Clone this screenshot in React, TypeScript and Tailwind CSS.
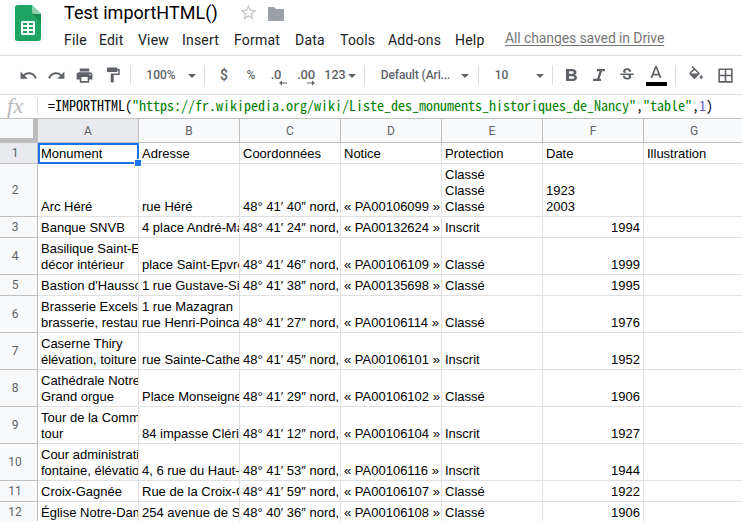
import React from 'react';

type Row = { h: number; a: string; b: string; c: string; d: string; e: string; f: string; g?: string; num?: boolean };

const rows: Row[] = [
  { h: 21, a: 'Monument', b: 'Adresse', c: 'Coordonnées', d: 'Notice', e: 'Protection', f: 'Date', g: 'Illustration' },
  { h: 53, a: 'Arc Héré', b: 'rue Héré', c: '48° 41′ 40″ nord,', d: '« PA00106099 »', e: 'Classé\nClassé\nClassé', f: '1923\n2003' },
  { h: 21, a: 'Banque SNVB', b: '4 place André-Ma', c: '48° 41′ 24″ nord,', d: '« PA00132624 »', e: 'Inscrit', f: '1994', num: true },
  { h: 37, a: 'Basilique Saint-E\ndécor intérieur', b: 'place Saint-Epvre', c: '48° 41′ 46″ nord,', d: '« PA00106109 »', e: 'Classé', f: '1999', num: true },
  { h: 21, a: "Bastion d'Hausso", b: '1 rue Gustave-Si', c: '48° 41′ 38″ nord,', d: '« PA00135698 »', e: 'Classé', f: '1995', num: true },
  { h: 37, a: 'Brasserie Excels\nbrasserie, restau', b: '1 rue Mazagran\nrue Henri-Poinca', c: '48° 41′ 27″ nord,', d: '« PA00106114 »', e: 'Classé', f: '1976', num: true },
  { h: 37, a: 'Caserne Thiry\nélévation, toiture', b: 'rue Sainte-Cathe', c: '48° 41′ 45″ nord,', d: '« PA00106101 »', e: 'Inscrit', f: '1952', num: true },
  { h: 37, a: 'Cathédrale Notre\nGrand orgue', b: 'Place Monseigne', c: '48° 41′ 29″ nord,', d: '« PA00106102 »', e: 'Classé', f: '1906', num: true },
  { h: 37, a: 'Tour de la Comm\ntour', b: '84 impasse Cléri', c: '48° 41′ 12″ nord,', d: '« PA00106104 »', e: 'Inscrit', f: '1927', num: true },
  { h: 37, a: 'Cour administrati\nfontaine, élévatio', b: '4, 6 rue du Haut-', c: '48° 41′ 53″ nord,', d: '« PA00106116 »', e: 'Inscrit', f: '1944', num: true },
  { h: 21, a: 'Croix-Gagnée', b: 'Rue de la Croix-G', c: '48° 41′ 59″ nord,', d: '« PA00106107 »', e: 'Classé', f: '1922', num: true },
  { h: 21, a: 'Église Notre-Dam', b: '254 avenue de S', c: '48° 40′ 36″ nord,', d: '« PA00106108 »', e: 'Classé', f: '1906', num: true },
];

const menus = [
  { t: 'File', w: 'w-[35px]' },
  { t: 'Edit', w: 'w-[39px]' },
  { t: 'View', w: 'w-11' },
  { t: 'Insert', w: 'w-[52px]' },
  { t: 'Format', w: 'w-[61px]' },
  { t: 'Data', w: 'w-[45px]' },
  { t: 'Tools', w: 'w-12' },
  { t: 'Add-ons', w: 'w-[67px]' },
  { t: 'Help', w: 'w-[50px]' },
];

function Icon({ d, size = 18 }: { d: string; size?: number }) {
  return (
    <svg width={size} height={size} viewBox="0 0 24 24" fill="currentColor" className="shrink-0">
      <path d={d} />
    </svg>
  );
}

function Caret() {
  return <span className="mt-px block h-0 w-0 shrink-0 border-x-4 border-t-4 border-x-transparent border-t-[#5f6368]" />;
}

function Sep() {
  return <span className="h-5 w-px shrink-0 bg-[#dadce0]" />;
}

function Tool({ w, children }: { w: string; children?: React.ReactNode }) {
  return <div className={`flex h-full shrink-0 items-center justify-center ${w}`}>{children}</div>;
}

function Header() {
  return (
    <header className="flex h-[55px] shrink-0">
      <svg width="64" height="55" viewBox="0 0 64 55" className="shrink-0">
        <path d="M17.500 5H32l9 9v24.500a2.500 2.500 0 0 1-2.500 2.500h-21a2.500 2.500 0 0 1-2.500-2.500V7.500A2.500 2.500 0 0 1 17.500 5z" fill="#20a464" />
        <path d="M32.500 14H41v8.500z" fill="#178a50" />
        <path d="M32 5l9 9h-7a2 2 0 0 1-2-2z" fill="#8ed1b1" />
        <path fillRule="evenodd" fill="#f1f8f4" d="M21 21h14v14H21zM23 23v2h4v-2zM29 23v2h4v-2zM23 27v2h4v-2zM29 27v2h4v-2zM23 31v2h4v-2zM29 31v2h4v-2z" />
      </svg>
      <div className="flex flex-col">
        <div className="flex h-[26px] items-center text-black">
          <span className="w-[175px] whitespace-nowrap text-[18px] leading-[26px] tracking-[0.030px]">Test importHTML()</span>
          <span className="w-[29px] pb-0.5 text-[#c4c6c9]">
            <Icon size={19} d="M22 9.240l-7.190-.62L12 2 9.190 8.630 2 9.240l5.460 4.730L5.820 21 12 17.270 18.180 21l-1.630-7.030L22 9.240zM12 15.400l-3.760 2.270 1-4.280-3.320-2.880 4.380-.38L12 6.100l1.710 4.040 4.380.38-3.320 2.880 1 4.280L12 15.400z" />
          </span>
          <svg width="17" height="15" viewBox="0 0 17 15" fill="#9aa0a6"><path d="M0 1h6l2 2h8v12H0z" /></svg>
        </div>
        <nav className="flex h-7 items-center text-sm text-[#202124]">
          {menus.map((m) => (
            <span key={m.t} className={`shrink-0 whitespace-nowrap tracking-[0.2px] ${m.w}`}>{m.t}</span>
          ))}
          <span className="mb-1 whitespace-nowrap tracking-[-0.110px] text-[#777] underline underline-offset-2">All changes saved in Drive</span>
        </nav>
      </div>
    </header>
  );
}

function Toolbar() {
  return (
    <div className="flex h-10 shrink-0 items-center border-y border-[#dadce0] pl-[14px] text-[12px] font-medium text-[#5f6368]">
      <Tool w="w-7"><Icon size={19} d="M12.500 8c-2.650 0-5.050.99-6.900 2.600L2 7v9h9l-3.620-3.620c1.390-1.160 3.160-1.880 5.120-1.880 3.540 0 6.550 2.310 7.600 5.500l2.370-.78C21.080 11.030 17.150 8 12.500 8z" /></Tool>
      <Tool w="w-7"><Icon size={19} d="M18.400 10.600C16.550 8.990 14.150 8 11.500 8c-4.650 0-8.580 3.030-9.960 7.220L3.900 16c1.050-3.190 4.050-5.500 7.600-5.500 1.950 0 3.730.72 5.120 1.880L13 16h9V7l-3.600 3.600z" /></Tool>
      <Tool w="w-7"><Icon size={19} d="M19 8H5c-1.660 0-3 1.340-3 3v6h4v4h12v-4h4v-6c0-1.660-1.340-3-3-3zm-3 11H8v-5h8v5zm3-7c-.55 0-1-.45-1-1s.45-1 1-1 1 .45 1 1-.45 1-1 1zm-1-9H6v4h12V3z" /></Tool>
      <Tool w="w-8 pr-[3px]"><Icon d="M18 4V3c0-.55-.45-1-1-1H5c-.55 0-1 .45-1 1v4c0 .55.45 1 1 1h12c.55 0 1-.45 1-1V6h1v4H9v11c0 .55.45 1 1 1h2c.55 0 1-.45 1-1v-9h8V4h-3z" /></Tool>
      <Sep />
      <Tool w="w-[57px] pl-[3px]">100%</Tool>
      <Tool w="w-4 pr-2"><Caret /></Tool>
      <Sep />
      <Tool w="w-[38px]"><span className="text-[14px]">$</span></Tool>
      <Tool w="w-4">%</Tool>
      <Tool w="w-[34px]"><span className="relative text-[13px] tracking-[-0.200px]">.0<svg className="absolute left-2 top-[15px]" width="8" height="6" viewBox="0 0 8 6" fill="currentColor"><path d="M0 3l3-2.500v2h5v1H3v2z" /></svg></span></Tool>
      <Tool w="w-[26px]"><span className="relative text-[13px] tracking-[-0.300px]">.00<svg className="absolute left-2.5 top-[15px]" width="8" height="6" viewBox="0 0 8 6" fill="currentColor"><path d="M8 3L5 .5v2H0v1h5v2z" /></svg></span></Tool>
      <Tool w="w-[45px] pr-[3px]"><span className="mr-[2px] text-[12.500px]">123</span><Caret /></Tool>
      <Sep />
      <Tool w="w-24 pl-[5px]"><span className="whitespace-nowrap tracking-[-0.100px]">Default (Ari...</span></Tool>
      <Tool w="w-[17px] pr-[9px]"><Caret /></Tool>
      <Sep />
      <Tool w="w-[45px]">10</Tool>
      <Tool w="w-7 pl-1"><Caret /></Tool>
      <Sep />
      <Tool w="w-9"><svg width="11" height="12" viewBox="7 4 10.750 14" preserveAspectRatio="none" fill="currentColor"><path d="M15.600 10.790c.97-.67 1.650-1.770 1.650-2.790 0-2.260-1.750-4-4-4H7v14h7.040c2.090 0 3.710-1.700 3.710-3.790 0-1.520-.86-2.820-2.150-3.420zM10 6.500h3c.83 0 1.500.67 1.500 1.500s-.67 1.500-1.500 1.500h-3v-3zm3.500 9H10v-3h3.500c.83 0 1.500.67 1.500 1.500s-.67 1.500-1.500 1.500z" /></svg></Tool>
      <Tool w="w-5"><svg width="12" height="12" viewBox="0 0 12 12" fill="currentColor"><path d="M4 0v2.200h2.600L4.100 9.800H0V12h8V9.800H6.500L9 2.200h3V0z" /></svg></Tool>
      <Tool w="w-9"><Icon d="M7.240 8.750c-.26-.48-.39-1.030-.39-1.670 0-.61.130-1.160.4-1.670.26-.5.630-.93 1.110-1.290.48-.35 1.050-.63 1.700-.83.66-.19 1.390-.29 2.180-.29.81 0 1.540.11 2.210.34.66.22 1.230.54 1.690.94.47.4.83.88 1.080 1.430s.38 1.150.38 1.810h-3.010c0-.31-.05-.59-.15-.85-.09-.27-.24-.49-.44-.68-.2-.19-.45-.33-.75-.44-.3-.1-.66-.16-1.060-.16-.39 0-.74.04-1.030.13s-.53.21-.72.36c-.19.16-.34.34-.44.55-.1.21-.15.43-.15.66 0 .48.250.88.740 1.210.38.250.77.480 1.410.700H7.390c-.05-.08-.11-.17-.15-.25zM21 12v-2H3v2h9.620c.18.070.4.140.55.200.37.170.66.340.87.510s.35.360.43.570c.07.200.11.430.11.690 0 .230-.05.450-.14.660-.09.200-.23.380-.42.530-.19.150-.42.260-.71.350-.29.080-.63.130-1.010.130-.43 0-.83-.04-1.180-.13s-.66-.23-.91-.42c-.25-.19-.45-.44-.59-.75s-.25-.76-.25-1.210H6.400c0 .55.080 1.130.24 1.580s.37.850.65 1.210c.28.350.600.660.98.920.37.260.78.480 1.220.650.44.170.900.300 1.380.390.48.080.96.130 1.440.130.800 0 1.530-.09 2.180-.28s1.210-.45 1.670-.79c.46-.34.820-.77 1.070-1.270s.38-1.070.38-1.710c0-.600-.100-1.140-.31-1.610-.05-.11-.11-.23-.17-.33H21z" /></Tool>
      <Tool w="w-[22px] pt-0.5"><div className="flex flex-col items-center gap-1"><svg width="12" height="12" viewBox="5.500 3 13 14" fill="currentColor"><path d="M11 3L5.500 17h2.250l1.120-3h6.250l1.120 3h2.250L13 3h-2zm-1.380 9L12 5.670 14.380 12H9.620z" /></svg><span className="h-1 w-[21px] bg-black" /></div></Tool>
      <Tool w="w-2" />
      <Sep />
      <Tool w="w-[39px]"><Icon d="M16.560 8.940L7.620 0 6.210 1.410l2.380 2.380-5.150 5.150c-.59.59-.59 1.540 0 2.120l5.500 5.500c.29.290.68.440 1.060.440s.77-.15 1.060-.44l5.500-5.500c.59-.58.59-1.530 0-2.120zM5.210 10L10 5.210 14.790 10H5.210zM19 11.500s-2 2.170-2 3.500c0 1.100.9 2 2 2s2-.9 2-2c0-1.330-2-3.500-2-3.500z" /></Tool>
      <Tool w="w-5"><Icon size={19} d="M3 3v18h18V3H3zm8 16H5v-6h6v6zm0-8H5V5h6v6zm8 8h-6v-6h6v6zm0-8h-6V5h6v6z" /></Tool>
    </div>
  );
}

function FormulaBar() {
  return (
    <div className="flex h-6 shrink-0 items-center border-b border-[#c0c0c0]">
      <span className="w-[37px] pb-px pl-[7px] font-['Liberation_Serif',serif] text-[22px] italic leading-5 tracking-[0.5px] text-[#b7b7b7]">fx</span>
      <span className="h-[17px] w-px bg-[#dadce0]" />
      <code className="ml-2.5 whitespace-pre pb-[3px] font-['Noto_Sans_Mono_CJK_SC','DejaVu_Sans_Mono',monospace] text-[14px] leading-5 text-black">
        =IMPORTHTML(<span className="text-[#008000]">"https://fr.wikipedia.org/wiki/Liste_des_monuments_historiques_de_Nancy"</span>,<span className="text-[#008000]">"table"</span>,<span className="text-[#6a5acd]">1</span>)
      </code>
    </div>
  );
}

function Cell({ text, right, selected }: { text?: string; right?: boolean; selected?: boolean }) {
  return (
    <div className="relative w-[101px] shrink-0 border-b border-r border-[#e0e0e0]">
      <div className={`flex h-full items-end overflow-hidden px-[3px] pb-px ${right ? 'justify-end' : ''}`}>
        <span className="whitespace-pre leading-4">{text}</span>
      </div>
      {selected && (
        <>
          <span className="absolute -bottom-px -right-px left-0 top-0 border-2 border-[#1a73e8]" />
          <span className="absolute -bottom-1 -right-1 z-10 h-2 w-2 border border-white bg-[#1a73e8]" />
        </>
      )}
    </div>
  );
}

function Sheet() {
  return (
    <main className="min-h-0 flex-1 overflow-hidden font-['Liberation_Sans',Arial,sans-serif] text-[13px] text-black">
      <div className="flex h-6 w-[745px] font-[Roboto,sans-serif] text-[12px] text-[#5f6368]">
        <div className="w-[38px] shrink-0 border-b-[5px] border-r-[5px] border-[#bcbcbc] bg-[#f8f9fa]" />
        {['A', 'B', 'C', 'D', 'E', 'F', 'G'].map((c) => (
          <div key={c} className={`flex w-[101px] shrink-0 items-center justify-center border-b border-r border-[#c0c0c0] ${c === 'A' ? 'bg-[#e8eaed]' : 'bg-[#f8f9fa]'}`}>{c}</div>
        ))}
      </div>
      {rows.map((r, i) => (
        <div key={i} className="flex w-[745px]" style={{ height: r.h }}>
          <div className={`flex w-[38px] shrink-0 items-center justify-center border-b border-r border-[#c0c0c0] pr-[7px] font-[Roboto,sans-serif] text-[12px] text-[#5f6368] ${i === 0 ? 'bg-[#e8eaed]' : 'bg-[#f8f9fa]'}`}>{i + 1}</div>
          <Cell text={r.a} selected={i === 0} />
          <Cell text={r.b} />
          <Cell text={r.c} />
          <Cell text={r.d} />
          <Cell text={r.e} />
          <Cell text={r.f} right={r.num} />
          <Cell text={r.g} />
        </div>
      ))}
    </main>
  );
}

export default function App() {
  return (
    <div className="flex h-[521px] w-[742px] flex-col overflow-hidden bg-white font-[Roboto,sans-serif]">
      <Header />
      <Toolbar />
      <FormulaBar />
      <Sheet />
    </div>
  );
}
